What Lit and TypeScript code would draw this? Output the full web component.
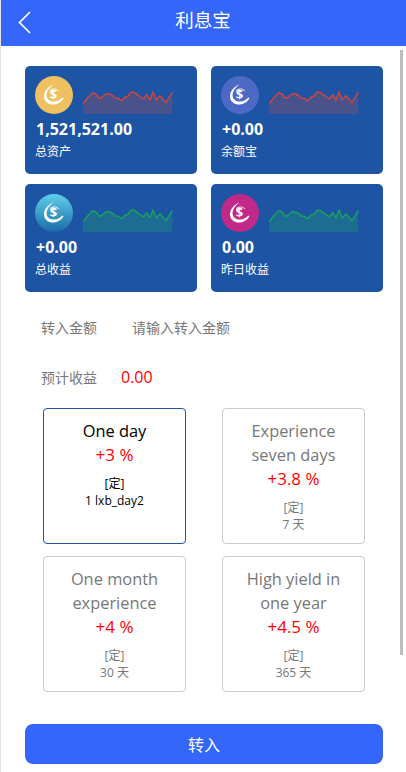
import { LitElement, html, css, svg } from "lit";
import { customElement } from "lit/decorators.js";

const SPARK: [number, number][] = [[0,24],[5,17.5],[9.7,12.7],[13,14],[16.3,18.3],[19,17.3],[23,13.7],[27,14],[30.3,16],[32,18],[35.3,18.3],[38.7,20.7],[42,17.3],[45.3,16],[47.7,12.3],[51.3,12.3],[55.3,15.3],[60.3,19],[63.7,14.7],[67,20],[70,12],[73.3,20],[77,15.7],[83,22.7],[89.3,12.3]];

const line = SPARK.map((p) => p.join(",")).join(" ");
const area = `0,34 ${line} 89.3,34`;

interface Stat { value: string; label: string; icon: string; green: boolean }
const STATS: Stat[] = [
  { value: "1,521,521.00", label: "总资产", icon: "yellow", green: false },
  { value: "+0.00", label: "余额宝", icon: "indigo", green: false },
  { value: "+0.00", label: "总收益", icon: "sky", green: true },
  { value: "0.00", label: "昨日收益", icon: "magenta", green: true },
];

interface Plan { title: string; rate: string; days: string; active?: boolean }
const PLANS: Plan[] = [
  { title: "One day", rate: "+3 %", days: "1 lxb_day2", active: true },
  { title: "Experience seven days", rate: "+3.8 %", days: "7 天" },
  { title: "One month experience", rate: "+4 %", days: "30 天" },
  { title: "High yield in one year", rate: "+4.5 %", days: "365 天" },
];

const coin = svg`
  <path fill="#fff" d="M18.600 8.300C12.500 11 8.600 15.800 9 21c.4 5 4.800 7.800 9.800 7.500 4-.2 7.200-2.300 9.700-6.300l-1.200-.6c-2.400 2.500-5 3.900-8.300 4-3.900.1-7.100-2-7.400-5.600-.3-4.200 2.600-8.200 7-11.700z"/>
  <path fill="none" stroke="#fff" stroke-width=".9" d="M15 14.600c2.600-2.200 6.400-2.200 8.800.2"/>
`;

@customElement("app-root")
export class AppRoot extends LitElement {
  static styles = css`
    :host {
      display: block;
      position: relative;
      width: 406px;
      height: 772px;
      overflow: hidden;
      background: #fff;
      font-family: "Open Sans", "Noto Sans CJK SC", sans-serif;
      box-sizing: border-box;
    }
    .edge {
      position: absolute;
      z-index: 1;
      left: 0;
      top: 0;
      bottom: 0;
      width: 1px;
      background: #e2e2e2;
    }
    .scroll {
      position: absolute;
      left: 400px;
      top: 50px;
      width: 3px;
      height: 605px;
      background: #bdbdbd;
    }
    header {
      height: 46px;
      box-sizing: border-box;
      padding-bottom: 8px;
      background: #3366f9;
      color: #fff;
      display: flex;
      align-items: center;
      justify-content: center;
      font-size: 18.500px;
      position: relative;
    }
    .back {
      position: absolute;
      left: 18px;
      top: 11px;
      width: 13px;
      height: 23px;
    }
    main {
      padding: 20px 23px 0 25px;
    }
    .stats {
      display: grid;
      grid-template-columns: 172px 172px;
      gap: 10px 14px;
    }
    .stat {
      height: 108px;
      box-sizing: border-box;
      background: #1d54a3;
      border-radius: 5px;
      color: #fff;
      padding: 10px 10px 0 11px;
    }
    .top {
      display: flex;
      gap: 10px;
      height: 38px;
      margin-left: -1px;
    }
    .icon {
      width: 38px;
      height: 38px;
      border-radius: 50%;
      position: relative;
      flex: none;
    }
    .icon svg {
      display: block;
      width: 38px;
      height: 38px;
    }
    .dollar {
      position: absolute;
      left: 0;
      right: 1px;
      top: 10px;
      text-align: center;
      font-size: 13px;
      line-height: 16px;
      font-weight: 700;
    }
    .yellow { background: #efc05f; }
    .indigo { background: #4c6ac5; }
    .sky { background: linear-gradient(#5fcfec, #1b6ca6); }
    .magenta { background: #c0288a; }
    .spark {
      width: 90px;
      height: 34px;
      margin-top: 4px;
      display: block;
    }
    .value {
      font-size: 16px;
      font-weight: 700;
      line-height: 20px;
      margin-top: 5px;
    }
    .label {
      font-size: 12px;
      line-height: 16px;
      margin-top: 5px;
      margin-left: -1px;
    }
    .field {
      display: flex;
      align-items: center;
      height: 24px;
      padding-left: 16px;
      font-size: 14px;
      color: #777;
    }
    .first { margin-top: 23px; }
    .second { margin-top: 26px; }
    .name { width: 91px; flex: none; }
    .field input {
      border: 0;
      outline: 0;
      padding: 0;
      width: 200px;
      font: inherit;
      color: #333;
      background: transparent;
    }
    .field input::placeholder { color: #777; opacity: 1; }
    .earn {
      color: #ff0000;
      font-size: 16px;
      margin-left: -11px;
    }
    .plans {
      display: grid;
      grid-template-columns: 143px 143px;
      gap: 12px 36px;
      margin: 19px 0 0 18px;
    }
    .plan {
      height: 136px;
      box-sizing: border-box;
      border: 1px solid #ccc;
      border-radius: 4px;
      padding: 10px 12px 0;
      text-align: center;
      color: #777;
    }
    .plan.active {
      border-color: #1d54a3;
      color: #000;
    }
    .title {
      font-size: 16.400px;
      line-height: 24px;
    }
    .rate {
      font-size: 17px;
      line-height: 24px;
      color: #ff0000;
    }
    .tag {
      font-size: 12px;
      line-height: 17px;
      margin-top: 8px;
    }
    .days {
      font-size: 12px;
      line-height: 17px;
    }
    button {
      display: block;
      width: 358px;
      height: 40px;
      margin-top: 32px;
      border: 0;
      border-radius: 8px;
      background: #3366f9;
      color: #fff;
      font: inherit;
      font-size: 16px;
    }
  `;

  render() {
    return html`
      <div class="edge"></div>
      <header>
        <svg class="back" viewBox="0 0 13 23">
          <path d="M12 1 1.500 11.500 12 22" fill="none" stroke="#fff" stroke-width="1.700"/>
        </svg>
        利息宝
      </header>
      <main>
        <section class="stats">
          ${STATS.map((s) => html`
            <article class="stat">
              <div class="top">
                <div class="icon ${s.icon}">
                  <svg viewBox="0 0 38 38">${coin}</svg>
                  <span class="dollar">$</span>
                </div>
                <svg class="spark" viewBox="0 0 90 34">
                  <polygon points=${area} fill=${s.green ? "rgba(30,170,110,.3)" : "rgba(210,75,70,.25)"}/>
                  <polyline points=${line} fill="none" stroke=${s.green ? "#17a05f" : "#c9473f"} stroke-width="1.500" stroke-linejoin="round"/>
                </svg>
              </div>
              <div class="value">${s.value}</div>
              <div class="label">${s.label}</div>
            </article>
          `)}
        </section>
        <div class="field first">
          <span class="name">转入金额</span>
          <input placeholder="请输入转入金额" />
        </div>
        <div class="field second">
          <span class="name">预计收益</span>
          <span class="earn">0.00</span>
        </div>
        <section class="plans">
          ${PLANS.map((p) => html`
            <article class="plan ${p.active ? "active" : ""}">
              <div class="title">${p.title}</div>
              <div class="rate">${p.rate}</div>
              <div class="tag">[定]</div>
              <div class="days">${p.days}</div>
            </article>
          `)}
        </section>
        <button>转入</button>
      </main>
      <div class="scroll"></div>
    `;
  }
}
